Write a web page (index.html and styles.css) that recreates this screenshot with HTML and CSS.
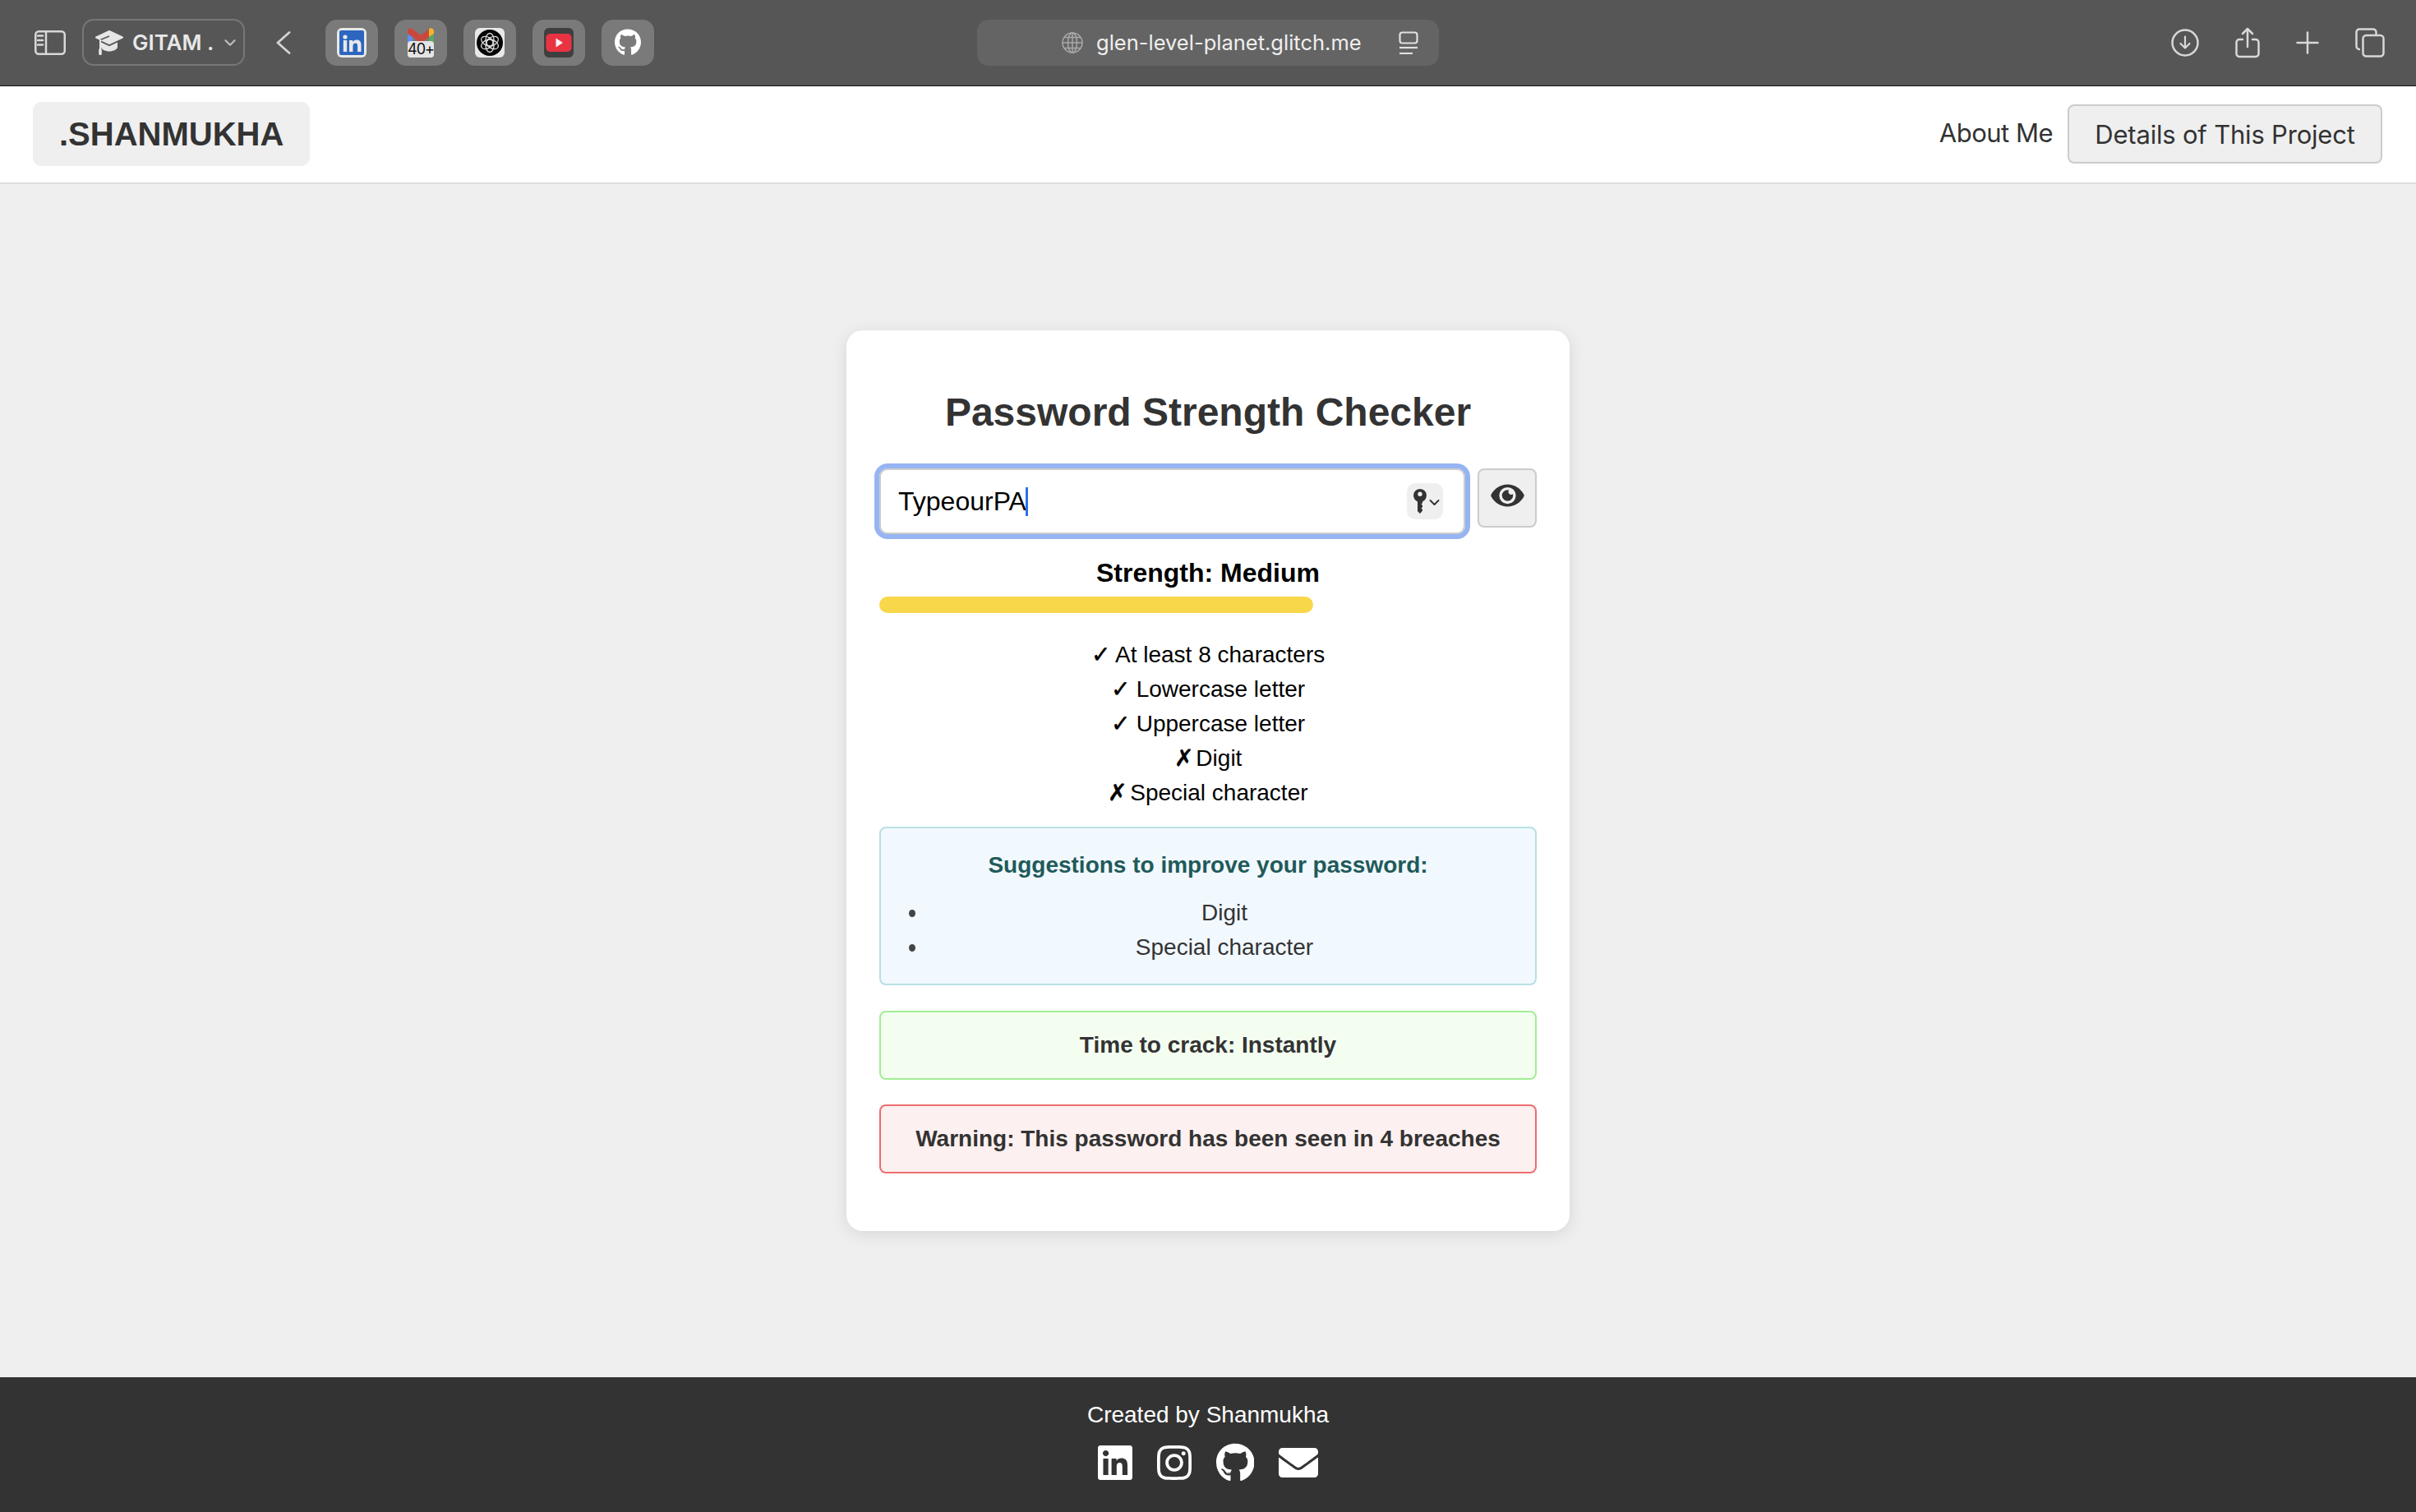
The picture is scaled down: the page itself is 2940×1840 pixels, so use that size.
FILE: index.html

```html
<!DOCTYPE html>
<html lang="en">
  <head>
    <meta charset="UTF-8" />
    <meta name="viewport" content="width=device-width, initial-scale=1.0" />
    <title>Password Strength Checker</title>
    <link rel="stylesheet" href="styles.css">
  </head>
  <body>
    <svg class="sprite" aria-hidden="true">
      <symbol id="i-github" viewBox="0 0 496 512">
        <path d="M165.9 397.4c0 2-2.3 3.6-5.2 3.6-3.3 0-5.6-1.6-5.6-3.6 0-2 2.3-3.6 5.2-3.6 3-.3 5.6 1.3 5.6 3.6zm-31.1-4.5c-.7 2 1.3 4.3 4.3 4.9 2.6 1 5.6 0 6.2-2s-1.3-4.3-4.3-5.2c-2.6-.7-5.5.3-6.2 2.3zm44.2-1.7c-2.9.7-4.9 2.6-4.6 4.9.3 2 2.9 3.3 5.9 2.6 2.9-.7 4.9-2.6 4.6-4.6-.3-1.9-3-3.2-5.9-2.9zM244.8 8C106.1 8 0 113.3 0 252c0 110.9 69.8 205.8 169.5 239.2 12.8 2.3 17.3-5.6 17.3-12.1 0-6.2-.3-40.4-.3-61.4 0 0-70 15-84.7-29.8 0 0-11.4-29.1-27.8-36.6 0 0-22.9-15.7 1.6-15.4 0 0 24.9 2 38.6 25.8 21.9 38.6 58.6 27.5 72.9 20.9 2.3-16 8.8-27.1 16-33.7-55.9-6.2-112.3-14.3-112.3-110.5 0-27.5 7.6-41.3 23.6-58.9-2.6-6.5-11.1-33.3 2.6-67.9 20.9-6.5 69 27 69 27 20-5.6 41.5-8.5 62.8-8.5s42.8 2.9 62.8 8.5c0 0 48.1-33.6 69-27 13.7 34.7 5.2 61.4 2.6 67.9 16 17.7 25.8 31.5 25.8 58.9 0 96.5-58.9 104.2-114.8 110.5 9.2 7.9 17 22.9 17 46.4 0 33.7-.3 75.4-.3 83.6 0 6.5 4.6 14.4 17.3 12.1C428.2 457.8 496 362.9 496 252 496 113.3 383.5 8 244.8 8z"/>
      </symbol>
    </svg>

    <!-- browser chrome -->
    <div class="toolbar">
      <div class="toolbar-left">
        <svg class="sidebar-icon" width="38" height="30" viewBox="0 0 38 30" fill="none" stroke="#d8d8d8" stroke-width="2.5">
          <rect x="1.25" y="1.25" width="35.5" height="27.5" rx="4"/>
          <path d="M14 1v28"/>
          <path d="M4 6.5h6M4 12h6M4 17.5h6" stroke-linecap="round"/>
        </svg>
        <div class="profile">
          <svg width="34" height="30" viewBox="0 0 34 30" fill="#e6e6e6">
            <path d="M17 1 33 8.500 17 16 1 8.500z" stroke="#e6e6e6" stroke-width="2" stroke-linejoin="round"/>
            <path d="M7 14.500v5.500c0 3 5 5.500 10 5.500s10-2.500 10-5.500v-5.500l-10 4.800z"/>
            <path d="M6 11.500 17 7" fill="none" stroke="#565656" stroke-width="1.500"/>
            <rect x="5" y="11" width="2" height="12"/>
            <rect x="4.200" y="22" width="3.600" height="8" rx="1.500"/>
          </svg>
          <span class="profile-name">GITAM .</span>
          <svg width="14" height="8" viewBox="0 0 14 8" fill="none" stroke="#bdbdbd" stroke-width="2.2" stroke-linecap="round" stroke-linejoin="round">
            <path d="M1.500 1.200 7 6.800l5.500-5.600"/>
          </svg>
        </div>
        <svg class="back-icon" width="18" height="28" viewBox="0 0 18 28" fill="none" stroke="#d4d4d4" stroke-width="2.800" stroke-linecap="round" stroke-linejoin="round">
          <path d="M16 1.500 2 14l14 12.500"/>
        </svg>
        <div class="tabs">
          <div class="tile">
            <svg width="36" height="36" viewBox="0 0 36 36">
              <rect width="36" height="36" rx="6" fill="#e8e8e8"/>
              <rect x="3" y="3" width="30" height="30" rx="2" fill="#2c66bf"/>
              <circle cx="10" cy="11" r="2.600" fill="#e8e8e8"/>
              <rect x="7.800" y="15" width="4.400" height="14" fill="#e8e8e8"/>
              <path d="M15 15h4.200v2c1-1.500 2.600-2.400 4.800-2.400 4 0 5.500 2.600 5.500 6.400v8h-4.400v-7.300c0-2-.7-3.300-2.500-3.300s-3.200 1.300-3.200 3.500v7.100H15z" fill="#e8e8e8"/>
            </svg>
          </div>
          <div class="tile">
            <div class="gmail">
              <svg width="32" height="20" viewBox="0 0 32 20">
                <path d="M0 6h6v14H0z" fill="#5f8ff0"/>
                <path d="M26 6h6v14h-6z" fill="#5aa765"/>
                <path d="M0 4c0-3.500 3.500-5 6-2.800L16 9l10-7.800c2.500-2.200 6-.7 6 2.800v3l-6 4-10 7.500L6 11 0 7z" fill="#c9483b"/>
                <path d="M26 1.200c2.500-2.200 6-.7 6 2.800v3l-6 4z" fill="#efb62f"/>
              </svg>
              <span class="gmail-count">40+</span>
            </div>
          </div>
          <div class="tile">
            <svg width="36" height="36" viewBox="0 0 36 36">
              <rect width="36" height="36" rx="6" fill="#e8e8e8"/>
              <circle cx="18" cy="18" r="16" fill="#050505"/>
              <g fill="none" stroke="#d8d8d8" stroke-width="1.300">
                <ellipse cx="18" cy="14.500" rx="5" ry="8"/>
                <ellipse cx="18" cy="14.500" rx="5" ry="8" transform="rotate(60 18 18)"/>
                <ellipse cx="18" cy="14.500" rx="5" ry="8" transform="rotate(120 18 18)"/>
                <ellipse cx="18" cy="14.500" rx="5" ry="8" transform="rotate(180 18 18)"/>
                <ellipse cx="18" cy="14.500" rx="5" ry="8" transform="rotate(240 18 18)"/>
                <ellipse cx="18" cy="14.500" rx="5" ry="8" transform="rotate(300 18 18)"/>
              </g>
            </svg>
          </div>
          <div class="tile">
            <svg width="36" height="36" viewBox="0 0 36 36">
              <rect width="36" height="36" rx="6" fill="#3f3f3f"/>
              <rect x="2.500" y="7" width="31" height="22" rx="5" fill="#ea3342"/>
              <path d="M14.500 12.500 23 18l-8.500 5.500z" fill="#f4f4f4"/>
            </svg>
          </div>
          <div class="tile">
            <svg class="tile-github" width="32" height="33" fill="#fff"><use href="#i-github"/></svg>
          </div>
        </div>
      </div>

      <div class="address-bar">
        <svg class="globe" width="26" height="26" viewBox="0 0 26 26" fill="none" stroke="#a9a9a9" stroke-width="1.500">
          <circle cx="13" cy="13" r="12"/>
          <ellipse cx="13" cy="13" rx="5.500" ry="12"/>
          <path d="M13 1v24M1 13h24M3 6.500h20M3 19.500h20"/>
        </svg>
        <span class="address-text">glen-level-planet.glitch.me</span>
        <svg class="reader" width="24" height="28" viewBox="0 0 24 28" fill="none" stroke="#e0e0e0" stroke-width="2.200">
          <rect x="1.500" y="1.500" width="21" height="13" rx="3"/>
          <path d="M1 20h22"/>
          <path d="M1 27h16"/>
        </svg>
      </div>

      <div class="toolbar-right">
        <svg width="34" height="34" viewBox="0 0 34 34" fill="none" stroke="#d8d8d8" stroke-width="2.500" stroke-linecap="round" stroke-linejoin="round">
          <circle cx="17" cy="17" r="15.500"/>
          <path d="M17 9.500v14M11.500 18l5.500 5.500 5.500-5.500" stroke-width="2.200"/>
        </svg>
        <svg width="30" height="38" viewBox="0 0 30 38" fill="none" stroke="#d8d8d8" stroke-width="2.500" stroke-linecap="round" stroke-linejoin="round">
          <path d="M9 15H5a3.500 3.500 0 0 0-3.500 3.500v14A3.500 3.500 0 0 0 5 36h20a3.500 3.500 0 0 0 3.500-3.500v-14A3.500 3.500 0 0 0 25 15h-4"/>
          <path d="M15 24V2M9 8l6-6 6 6"/>
        </svg>
        <svg width="28" height="28" viewBox="0 0 28 28" fill="none" stroke="#d8d8d8" stroke-width="2.500" stroke-linecap="round">
          <path d="M14 1.500v25M1.500 14h25"/>
        </svg>
        <svg width="36" height="36" viewBox="0 0 36 36" fill="none" stroke="#d8d8d8" stroke-width="2.500" stroke-linejoin="round">
          <path d="M6 26H5a3.500 3.500 0 0 1-3.500-3.500V5A3.500 3.500 0 0 1 5 1.500h17A3.500 3.500 0 0 1 25.500 5v4"/>
          <rect x="9.500" y="9" width="25" height="25.500" rx="4"/>
        </svg>
      </div>
    </div>

    <!-- page -->
    <nav class="navbar">
      <div class="logo">.SHANMUKHA</div>
      <div class="nav-links">
        <a class="nav-link">About Me</a>
        <button class="nav-button">Details of This Project</button>
      </div>
    </nav>

    <main class="content">
      <div class="card">
        <h1 class="title">Password Strength Checker</h1>

        <div class="password-row">
          <div class="password-input">
            <span class="password-value">TypeourPA</span><span class="caret"></span>
            <div class="key-button">
              <svg width="36" height="30" viewBox="0 0 36 30" fill="#333">
                <path transform="translate(4 0)" d="M8 0a8 8 0 0 1 3 15.400V17l-1.500 1.500L11 20v2l-1.500 1.500L11 25v1.500L8 30l-3-3V15.400A8 8 0 0 1 8 0zm0 3.500a2.700 2.700 0 1 0 0 5.400 2.700 2.700 0 0 0 0-5.400z"/>
                <path d="M24.500 14l5 5 5-5" fill="none" stroke="#333" stroke-width="2" stroke-linecap="round" stroke-linejoin="round"/>
              </svg>
            </div>
          </div>
          <button class="eye-button">
            <svg class="eye-icon" width="41" height="36" viewBox="0 0 576 512" fill="#333">
              <path d="M572.52 241.4C518.29 135.59 410.93 64 288 64S57.68 135.64 3.48 241.41a32.35 32.35 0 0 0 0 29.19C57.71 376.41 165.07 448 288 448s230.32-71.64 284.52-177.41a32.35 32.35 0 0 0 0-29.19zM288 400a144 144 0 1 1 144-144 143.93 143.93 0 0 1-144 144zm0-240a95.31 95.31 0 0 0-25.31 3.79 47.85 47.85 0 0 1-66.9 66.9A95.78 95.78 0 1 0 288 160z"/>
            </svg>
          </button>
        </div>

        <div class="strength-label">Strength: Medium</div>
        <div class="strength-track">
          <div class="strength-fill" style="width: 66%"></div>
        </div>

        <ul class="criteria">
          <li><span class="mark">✓</span> At least 8 characters</li>
          <li><span class="mark">✓</span> Lowercase letter</li>
          <li><span class="mark">✓</span> Uppercase letter</li>
          <li><span class="mark mark-cross">✗</span> Digit</li>
          <li><span class="mark mark-cross">✗</span> Special character</li>
        </ul>

        <div class="suggestions">
          <h4 class="suggestions-title">Suggestions to improve your password:</h4>
          <ul class="suggestions-list">
            <li>Digit</li>
            <li>Special character</li>
          </ul>
        </div>

        <div class="notice notice-time">Time to crack: Instantly</div>
        <div class="notice notice-warning">Warning: This password has been seen in 4 breaches</div>
      </div>
    </main>

    <footer class="footer">
      <p class="footer-text">Created by Shanmukha</p>
      <div class="footer-icons">
        <svg width="42" height="48" viewBox="0 0 448 512" fill="#fff">
          <path d="M416 32H31.9C14.3 32 0 46.5 0 64.3v383.4C0 465.5 14.3 480 31.9 480H416c17.6 0 32-14.5 32-32.3V64.3c0-17.8-14.4-32.3-32-32.3zM135.4 416H69V202.2h66.5V416zm-33.2-243c-21.3 0-38.5-17.3-38.5-38.5S80.9 96 102.2 96c21.2 0 38.5 17.3 38.5 38.5 0 21.3-17.2 38.5-38.5 38.5zm282.1 243h-66.4V312c0-24.8-.5-56.7-34.5-56.7-34.6 0-39.9 27-39.9 54.9V416h-66.4V202.2h63.7v29.2h.9c8.9-16.8 30.6-34.5 62.9-34.5 67.2 0 79.7 44.3 79.7 101.9V416z"/>
        </svg>
        <svg width="42" height="48" viewBox="0 0 448 512" fill="#fff">
          <path d="M224.1 141c-63.6 0-114.9 51.3-114.9 114.9s51.3 114.9 114.9 114.9S339 319.5 339 255.9 287.7 141 224.1 141zm0 189.6c-41.1 0-74.7-33.5-74.7-74.7s33.5-74.7 74.7-74.7 74.7 33.5 74.7 74.7-33.6 74.7-74.7 74.7zm146.4-194.3c0 14.9-12 26.8-26.8 26.8-14.9 0-26.8-12-26.8-26.8s12-26.8 26.8-26.8 26.8 12 26.8 26.8zm76.1 27.2c-1.7-35.9-9.9-67.7-36.2-93.9-26.2-26.2-58-34.4-93.9-36.2-37-2.1-147.9-2.1-184.9 0-35.8 1.7-67.6 9.9-93.9 36.1s-34.4 58-36.2 93.9c-2.1 37-2.1 147.9 0 184.9 1.7 35.9 9.9 67.7 36.2 93.9s58 34.4 93.9 36.2c37 2.1 147.9 2.1 184.9 0 35.9-1.7 67.7-9.9 93.9-36.2 26.2-26.2 34.4-58 36.2-93.9 2.1-37 2.1-147.8 0-184.8zM398.8 388c-7.8 19.6-22.9 34.7-42.6 42.6-29.5 11.7-99.5 9-132.1 9s-102.7 2.6-132.1-9c-19.6-7.8-34.7-22.9-42.6-42.6-11.7-29.5-9-99.5-9-132.1s-2.6-102.7 9-132.1c7.8-19.6 22.9-34.7 42.6-42.6 29.5-11.7 99.5-9 132.1-9s102.700-2.6 132.1 9c19.6 7.8 34.7 22.9 42.6 42.6 11.7 29.5 9 99.5 9 132.1s2.7 102.7-9 132.1z"/>
        </svg>
        <svg width="46.500" height="48" fill="#fff"><use href="#i-github"/></svg>
        <svg width="48" height="48" viewBox="0 0 512 512" fill="#fff">
          <path d="M502.3 190.8c3.9-3.1 9.7-.2 9.7 4.7V400c0 26.5-21.5 48-48 48H48c-26.5 0-48-21.5-48-48V195.6c0-5 5.7-7.8 9.7-4.7 22.4 17.4 52.1 39.5 154.1 113.6 21.1 15.4 56.7 47.8 92.2 47.6 35.7.3 72-32.8 92.3-47.6 102-74.1 131.6-96.3 154-113.7zM256 320c23.2.4 56.6-29.2 73.4-41.4 132.7-96.3 142.8-104.7 173.4-128.7 5.8-4.5 9.2-11.5 9.2-18.9v-19c0-26.5-21.5-48-48-48H48C21.5 64 0 85.5 0 112v19c0 7.4 3.4 14.3 9.2 18.9 30.6 23.9 40.7 32.4 173.4 128.7 16.8 12.2 50.2 41.8 73.4 41.4z"/>
        </svg>
      </div>
    </footer>
  </body>
</html>
```

FILE: styles.css

```css
* {
  box-sizing: border-box;
}
body {
  font-family: "Liberation Sans", Arial, sans-serif;
  background-color: #efefef;
  color: #333;
  margin: 0;
  height: 100vh;
  display: flex;
  flex-direction: column;
}
.sprite {
  display: none;
}

/* browser toolbar */
.toolbar {
  display: grid;
  grid-template-columns: 1fr 562px 1fr;
  align-items: center;
  height: 105px;
  flex-shrink: 0;
  padding: 0 38px 1px 38px;
  background-color: #565656;
  border-bottom: 1px solid #111;
}
.toolbar-left {
  display: flex;
  align-items: center;
}
.sidebar-icon {
  margin-left: 4px;
  margin-right: 20px;
}
.profile {
  display: flex;
  align-items: center;
  width: 198px;
  height: 57px;
  padding: 0 9px 0 14px;
  border: 2px solid #777;
  border-radius: 14px;
}
.profile-name {
  font-family: "Inter", sans-serif;
  font-size: 26px;
  font-weight: 600;
  color: #e8e8e8;
  margin: 0 auto 0 11px;
}
.back-icon {
  margin-left: 38px;
  margin-right: 42px;
}
.tabs {
  display: flex;
  gap: 20px;
}
.tile {
  width: 64px;
  height: 56px;
  border-radius: 14px;
  background-color: #7a7a7a;
  display: flex;
  align-items: center;
  justify-content: center;
}
.tile svg {
  display: block;
}
.gmail {
  width: 32px;
  height: 36px;
  display: flex;
  flex-direction: column;
  overflow: hidden;
  border-radius: 3px;
}
.gmail svg {
  flex-shrink: 0;
}
.gmail-count {
  margin-top: -4px;
  height: 20px;
  background-color: #e4e4e4;
  border-radius: 4px 4px 3px 3px;
  color: #111;
  font-family: "Inter", sans-serif;
  font-size: 18px;
  line-height: 20px;
  text-align: center;
  letter-spacing: -1px;
  white-space: nowrap;
}
.address-bar {
  display: flex;
  align-items: center;
  height: 56px;
  padding-left: 103px;
  border-radius: 14px;
  background-color: #646464;
}
.address-text {
  font-family: "Inter", sans-serif;
  font-size: 25.500px;
  color: #efefef;
  margin-left: 16px;
  white-space: nowrap;
}
.reader {
  margin-left: auto;
  margin-right: 25px;
}
.toolbar-right {
  display: flex;
  align-items: center;
  justify-content: flex-end;
  gap: 44px;
}

/* navbar */
.navbar {
  display: flex;
  align-items: center;
  justify-content: space-between;
  height: 119px;
  flex-shrink: 0;
  padding: 0 41px 1px 40px;
  background-color: #fff;
  border-bottom: 2px solid #ddd;
}
.logo {
  font-size: 40px;
  font-weight: bold;
  line-height: 46px;
  padding: 16px 32px;
  border-radius: 10px;
  background-color: #efefef;
}
.nav-links {
  display: flex;
  align-items: center;
  gap: 18px;
}
.nav-link {
  font-family: "Inter", sans-serif;
  font-size: 31px;
  letter-spacing: -0.5px;
  color: #333;
  margin-bottom: 4px;
}
.nav-button {
  font-family: "Inter", sans-serif;
  font-size: 31px;
  letter-spacing: -0.2px;
  color: #333;
  height: 72px;
  width: 383px;
  padding: 0;
  background-color: #efefef;
  border: 2px solid #ccc;
  border-radius: 8px;
}

/* card */
.content {
  flex: 1;
  display: flex;
  align-items: center;
  justify-content: center;
}
.card {
  width: 880px;
  padding: 40px 40px 70px;
  background-color: #fff;
  border-radius: 20px;
  box-shadow: 0 4px 20px rgba(0, 0, 0, 0.1);
  text-align: center;
}
.title {
  font-size: 48px;
  line-height: 56px;
  margin: 32px 0 40px;
  color: #333;
}
.password-row {
  display: flex;
  align-items: flex-start;
  gap: 15px;
}
.password-input {
  flex: 1;
  display: flex;
  align-items: center;
  height: 80px;
  padding: 0 25px 0 21px;
  background-color: #fff;
  border: 2px solid #ccc;
  border-radius: 10px;
  outline: 6px solid #96b4f2;
  outline-offset: 0;
  font-size: 32px;
  color: #000;
}
.caret {
  width: 3px;
  height: 35px;
  margin-left: -1px;
  background-color: #2f6fec;
}
.key-button {
  margin-left: auto;
  width: 44px;
  height: 44px;
  border-radius: 10px;
  background-color: #efefef;
  display: flex;
  align-items: center;
  justify-content: center;
}
.eye-button {
  width: 72px;
  height: 72px;
  padding: 0 0 6px;
  background-color: #efefef;
  border: 2px solid #ccc;
  border-radius: 8px;
  display: flex;
  align-items: center;
  justify-content: center;
}
.eye-icon {
  transform: scaleX(-1);
}
.strength-label {
  font-size: 32px;
  font-weight: bold;
  line-height: 42px;
  margin-top: 26px;
  color: #000;
}
.strength-track {
  height: 20px;
  margin-top: 8px;
}
.strength-fill {
  height: 100%;
  background-color: #f9d74a;
  border-radius: 10px;
}
.criteria {
  list-style: none;
  margin: 30px 0 20px;
  padding: 0;
  font-size: 28px;
  line-height: 42px;
  color: #000;
}
.mark {
  -webkit-text-stroke: 0.5px #000;
}
.mark-cross {
  margin-right: -4px;
}

/* boxes */
.suggestions {
  padding: 29px 30px 23px;
  background-color: #f1f8fe;
  border: 2px solid #b8e0e6;
  border-radius: 8px;
  font-size: 28px;
}
.suggestions-title {
  font-size: 28px;
  line-height: 32px;
  margin: 0 0 21px;
  color: #1f5a5a;
}
.suggestions-list {
  list-style: none;
  margin: 0;
  padding-left: 40px;
  line-height: 42px;
}
.suggestions-list li {
  position: relative;
}
.suggestions-list li::before {
  content: "";
  position: absolute;
  left: -36px;
  top: 17px;
  width: 8px;
  height: 9px;
  border-radius: 50%;
  background-color: #444;
}
.notice {
  font-size: 28px;
  font-weight: bold;
  line-height: 42px;
  padding: 19px;
  border: 2px solid;
  border-radius: 8px;
}
.notice-time {
  margin-top: 31px;
  background-color: #f3fef1;
  border-color: #a3ee95;
}
.notice-warning {
  margin-top: 30px;
  background-color: #fcf0f0;
  border-color: #ee6e6e;
}

/* footer */
.footer {
  height: 164px;
  flex-shrink: 0;
  padding-top: 25px;
  background-color: #333;
  color: #fff;
  text-align: center;
}
.footer-text {
  font-size: 28px;
  line-height: 42px;
  margin: 0 0 13px;
}
.footer-icons {
  display: flex;
  justify-content: center;
  gap: 30px;
}
```
